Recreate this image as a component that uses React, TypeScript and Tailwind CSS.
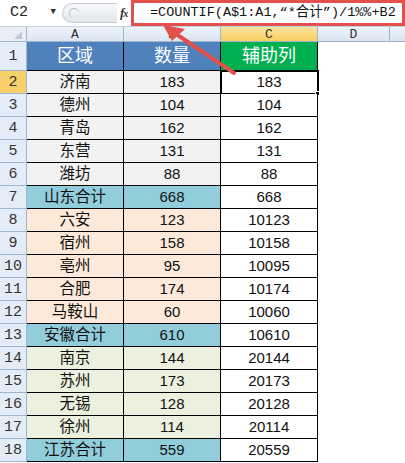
import React from "react";

type Row = { n: number; a: string; b: number; c: number; tone: "gray" | "sum" | "peach" | "green" };

const rows: Row[] = [
  { n: 2, a: "济南", b: 183, c: 183, tone: "gray" },
  { n: 3, a: "德州", b: 104, c: 104, tone: "gray" },
  { n: 4, a: "青岛", b: 162, c: 162, tone: "gray" },
  { n: 5, a: "东营", b: 131, c: 131, tone: "gray" },
  { n: 6, a: "潍坊", b: 88, c: 88, tone: "gray" },
  { n: 7, a: "山东合计", b: 668, c: 668, tone: "sum" },
  { n: 8, a: "六安", b: 123, c: 10123, tone: "peach" },
  { n: 9, a: "宿州", b: 158, c: 10158, tone: "peach" },
  { n: 10, a: "亳州", b: 95, c: 10095, tone: "peach" },
  { n: 11, a: "合肥", b: 174, c: 10174, tone: "peach" },
  { n: 12, a: "马鞍山", b: 60, c: 10060, tone: "peach" },
  { n: 13, a: "安徽合计", b: 610, c: 10610, tone: "sum" },
  { n: 14, a: "南京", b: 144, c: 20144, tone: "green" },
  { n: 15, a: "苏州", b: 173, c: 20173, tone: "green" },
  { n: 16, a: "无锡", b: 128, c: 20128, tone: "green" },
  { n: 17, a: "徐州", b: 114, c: 20114, tone: "green" },
  { n: 18, a: "江苏合计", b: 559, c: 20559, tone: "sum" },
];

const toneBg = {
  gray: "bg-[#f2f2f2]",
  sum: "bg-[#92cddc]",
  peach: "bg-[#fde9d9]",
  green: "bg-[#ebf1de]",
};

const mono = "font-['Liberation_Mono','Noto_Sans_CJK_SC',monospace]";
const sans = "font-['Liberation_Sans','Noto_Sans_CJK_SC',sans-serif]";

export default function App() {
  return (
    <div className={`relative h-[463px] w-[405px] overflow-hidden bg-white ${sans}`}>
      {/* formula bar */}
      <div className="flex h-[27px] items-stretch border-b border-[#c5d1de] bg-white">
        <div className={`flex w-[62px] items-center justify-between pl-[10px] pr-[6px] text-[15px] text-[#222] ${mono}`}>
          <span>C2</span>
          <span className="text-[9px] text-[#333]">▼</span>
        </div>
        <div className="flex w-[58px] items-center">
          <div className="flex h-[20px] w-[55px] items-center rounded-l-full border border-r-0 border-[#c8ccd2] bg-gradient-to-b from-[#f7f8fa] to-[#e3e6ea] pl-[6px]">
            <div className="h-[10px] w-[10px] rounded-full border-t border-l border-[#b5bac2]" />
          </div>
        </div>
        <div className="flex w-[11px] items-center whitespace-nowrap font-['Liberation_Serif',serif] text-[13px] font-bold italic tracking-[-1px] text-[#333]">
          f<span className="text-[10px]">x</span>
        </div>
        <div
          className={`flex flex-1 items-center overflow-hidden whitespace-nowrap border-[3px] border-[#e2514c] pl-[16px] text-[13.5px] text-[#111] ${mono}`}
        >
          =COUNTIF(A$1:A1,“*合计”)/1%%+B2
        </div>
      </div>

      {/* column headers */}
      <div className={`flex h-[15px] border-b border-[#9eb6ce] text-[13px] leading-none text-[#333] ${mono}`}>
        <div className="relative w-[27px] border-r border-[#9eb6ce] bg-[#e9eef5]">
          <div className="absolute right-[4px] bottom-[2px] h-0 w-0 border-b-[8px] border-l-[8px] border-b-[#c3cbd4] border-l-transparent" />
        </div>
        <div className="flex w-[97px] items-center justify-center border-r border-[#9eb6ce] bg-gradient-to-b from-[#eef3f9] to-[#dbe5f1]">A</div>
        <div className="flex w-[97px] items-center justify-center border-r border-[#9eb6ce] bg-gradient-to-b from-[#eef3f9] to-[#dbe5f1]">B</div>
        <div className="flex w-[97px] items-center justify-center border-r border-[#9eb6ce] bg-gradient-to-b from-[#fbe39d] to-[#f8cf5f]">C</div>
        <div className="flex w-[72px] items-center justify-center border-r border-[#9eb6ce] bg-gradient-to-b from-[#eef3f9] to-[#dbe5f1]">D</div>
        <div className="flex-1 bg-gradient-to-b from-[#eef3f9] to-[#dbe5f1]" />
      </div>

      {/* row 1 */}
      <div className="flex h-[29px]">
        <div className={`flex w-[27px] items-end justify-center border-r border-b border-[#9eb6ce] bg-[#e4ecf7] pb-[2px] text-[15px] text-[#333] ${mono}`}>1</div>
        <div className="flex w-[97px] items-center justify-center border-r border-b border-black bg-[#4f81bd] text-[18px] text-white">区域</div>
        <div className="flex w-[97px] items-center justify-center border-r border-b border-black bg-[#4f81bd] text-[18px] text-white">数量</div>
        <div className="flex w-[97px] items-center justify-center border-r border-b border-black bg-[#00b050] text-[18px] text-white">辅助列</div>
        <div className="flex-1" />
      </div>

      {rows.map((r) => (
        <div key={r.n} className="flex h-[23px]">
          <div
            className={`flex w-[27px] items-center justify-center border-r border-b border-[#9eb6ce] pt-[3px] text-[15px] text-[#333] ${mono} ${
              r.n === 2 ? "bg-[#f8d06a]" : "bg-[#e4ecf7]"
            }`}
          >
            {r.n}
          </div>
          <div className={`flex w-[97px] items-center justify-center border-r border-b border-black text-[15.5px] text-[#111] ${toneBg[r.tone]}`}>
            {r.a}
          </div>
          <div className={`flex w-[97px] items-center justify-center border-r border-b border-black text-[15px] text-[#111] ${toneBg[r.tone]}`}>
            {r.b}
          </div>
          <div
            className={`relative flex w-[97px] items-center justify-center border-b border-r border-black bg-white text-[15px] text-[#111] ${
              r.n === 2 ? "outline-2 -outline-offset-1 outline-black" : ""
            }`}
          >
            {r.c}
            {r.n === 2 && <div className="absolute -right-[3px] -bottom-[3px] h-[5px] w-[5px] border border-white bg-black" />}
          </div>
          <div className="flex-1" />
        </div>
      ))}

      {/* arrow */}
      <svg className="pointer-events-none absolute top-0 left-0" width="405" height="463">
        <line x1="234" y1="73" x2="176" y2="34" stroke="#e2514c" strokeWidth="4" strokeLinecap="round" />
        <polygon points="163,25 185,29 172,41" fill="#e2514c" />
      </svg>
    </div>
  );
}
